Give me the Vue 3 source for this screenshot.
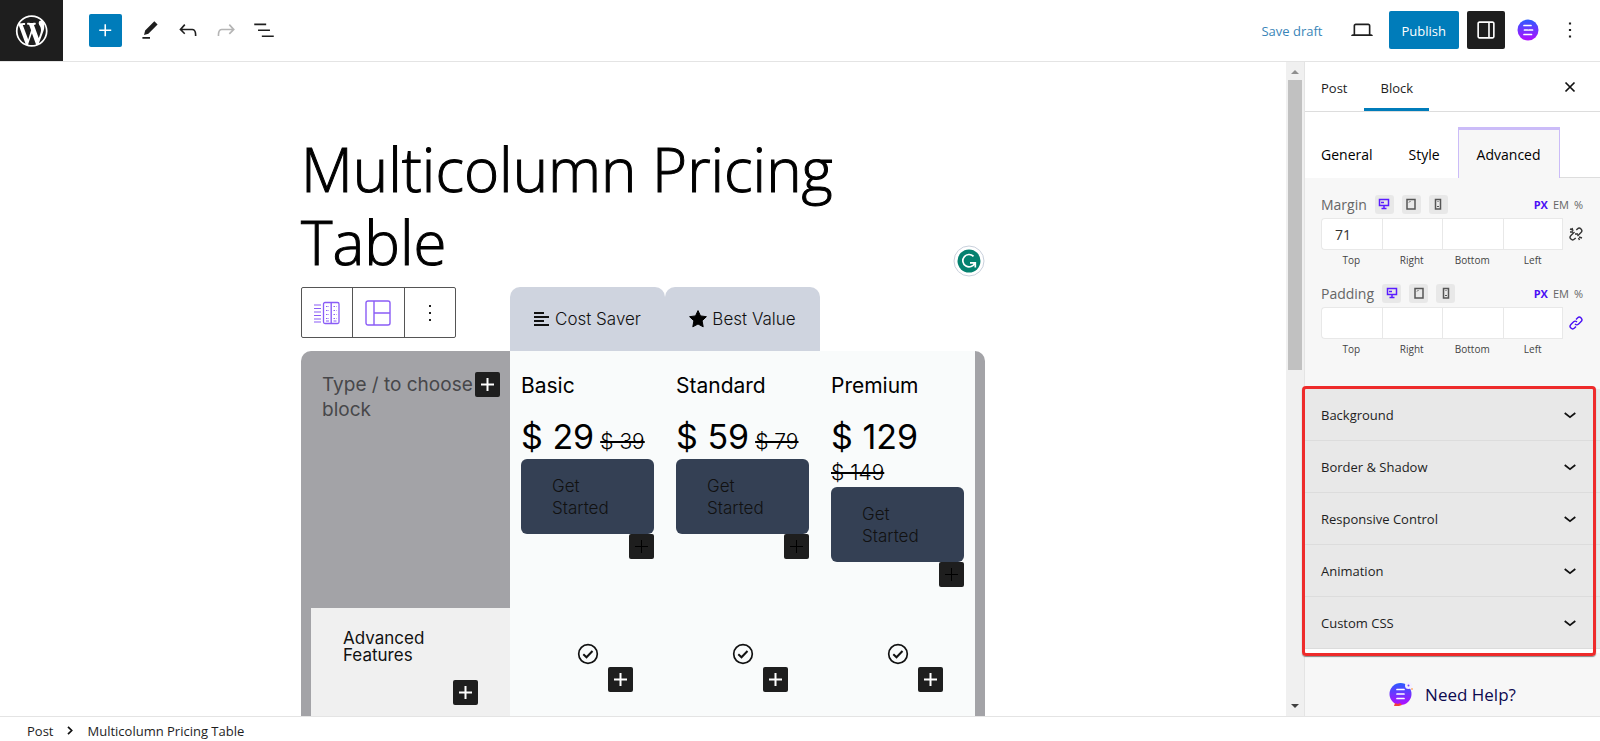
<template>
  <div class="editor">
    <header class="topbar">
      <a href="#" class="logo" aria-label="View posts">
        <svg width="34" height="34" viewBox="0 0 24 24" fill="#fff">
          <path d="M20 10c0-5.51-4.49-10-10-10C4.48 0 0 4.49 0 10c0 5.52 4.48 10 10 10 5.51 0 10-4.48 10-10zM7.78 15.37L4.37 6.22c.55-.02 1.17-.08 1.17-.08.5-.06.44-1.13-.06-1.11 0 0-1.45.11-2.37.11-.18 0-.37 0-.58-.01C4.12 2.69 6.87 1.11 10 1.11c2.33 0 4.45.87 6.05 2.34-.68-.11-1.65.39-1.65 1.58 0 .74.45 1.36.9 2.1.35.61.55 1.36.55 2.46 0 1.49-1.4 5-1.4 5l-3.03-8.37c.54-.02.82-.17.82-.17.5-.05.44-1.25-.06-1.22 0 0-1.44.12-2.38.12-.87 0-2.33-.12-2.33-.12-.5-.03-.56 1.2-.06 1.22l.92.08 1.26 3.41zM17.41 10c.24-.64.74-1.87.43-4.25.7 1.29 1.05 2.71 1.05 4.25 0 3.29-1.73 6.24-4.4 7.78.97-2.59 1.94-5.2 2.92-7.78zM6.1 18.09C3.12 16.65 1.11 13.53 1.11 10c0-1.3.23-2.48.72-3.59C3.25 10.3 4.67 14.2 6.1 18.09zm4.03-6.63l2.58 6.98c-.86.29-1.76.45-2.71.45-.79 0-1.57-.11-2.29-.33.81-2.38 1.62-4.74 2.42-7.1z" transform="translate(.6 .8) scale(1.12)" />
        </svg>
      </a>
      <div class="tools">
        <button class="inserter" aria-label="Add block">
          <svg width="25" height="25" viewBox="0 0 24 24" fill="#fff"><path d="M11 12.5V17.5H12.5V12.5H17.5V11H12.5V6H11V11H6V12.5H11Z" /></svg>
        </button>
        <button class="tool" aria-label="Tools">
          <svg width="26" height="26" viewBox="0 0 24 24" fill="#1e1e1e"><path d="m19 7-3-3-8.500 8.500-1 4 4-1L19 7Zm-7 11.500H5V20h7v-1.500Z" /></svg>
        </button>
        <button class="tool" aria-label="Undo">
          <svg width="26" height="26" viewBox="0 0 24 24" fill="#1e1e1e"><path d="M18.300 11.700c-.6-.6-1.400-.9-2.300-.9H6.700l2.900-3.300-1.100-1-4.500 5L8.500 16l1-1-2.700-2.700H16c.5 0 .9.200 1.300.500 1 1 1 3.400 1 4.500v.300h1.500v-.200c0-1.500 0-4.300-1.500-5.700z" /></svg>
        </button>
        <button class="tool" aria-label="Redo" disabled>
          <svg width="26" height="26" viewBox="0 0 24 24" fill="#b5b5b5"><path d="M15.600 6.500l-1.100 1 2.900 3.300H8c-.9 0-1.700.3-2.300.9-1.400 1.500-1.400 4.200-1.400 5.600v.2h1.500v-.3c0-1.100 0-3.500 1-4.500.3-.3.700-.5 1.300-.5h9.200L14.500 15l1.100 1.100 4.600-4.600-4.600-5z" /></svg>
        </button>
        <button class="tool" aria-label="Document overview">
          <svg width="26" height="26" viewBox="0 0 24 24" fill="#1e1e1e"><path d="M3 6h11v1.500H3V6Zm3.500 5.500h11V13h-11v-1.500ZM21 17H10v1.500h11V17Z" /></svg>
        </button>
      </div>
      <div class="actions">
        <button class="save">Save draft</button>
        <button class="tool" aria-label="Preview">
          <svg width="26" height="26" viewBox="0 0 24 24" fill="#1e1e1e"><path d="M20.500 16h-.7V8c0-1.100-.9-2-2-2H6.200c-1.100 0-2 .9-2 2v8h-.7c-.8 0-1.500.7-1.500 1.500h20c0-.8-.7-1.500-1.500-1.500zM5.700 8c0-.3.200-.5.500-.5h11.600c.3 0 .5.2.5.5v8H5.700V8z" /></svg>
        </button>
        <button class="publish">Publish</button>
        <button class="panel-toggle" aria-label="Settings">
          <svg width="26" height="26" viewBox="0 0 24 24" fill="#fff"><path fill-rule="evenodd" d="M18 4H6c-1.100 0-2 .9-2 2v12c0 1.100.9 2 2 2h12c1.100 0 2-.9 2-2V6c0-1.100-.9-2-2-2zm-4 14.500H6c-.3 0-.5-.2-.5-.5V6c0-.3.2-.5.5-.5h8v13zm4.500-.5c0 .3-.2.500-.5.500h-2.500v-13H18c.3 0 .5.200.5.500v12z" /></svg>
        </button>
        <button class="tool brand" aria-label="Essential Blocks">
          <svg width="22" height="22" viewBox="0 0 22 22">
            <defs>
              <linearGradient id="eb" x1="0" y1="0" x2="0" y2="1"><stop offset="0" stop-color="#2b5cff" /><stop offset="1" stop-color="#b30cff" /></linearGradient>
            </defs>
            <circle cx="11" cy="11" r="10.500" fill="url(#eb)" />
            <path d="M7 6.500h7M7.500 11h3M12 11h3.500M7 15.500h7.500" stroke="#fff" stroke-width="1.700" stroke-linecap="round" />
          </svg>
        </button>
        <button class="tool" aria-label="Options">
          <svg width="26" height="26" viewBox="0 0 24 24" fill="#1e1e1e"><path d="M13 19h-2v-2h2v2zm0-6h-2v-2h2v2zm0-6h-2V5h2v2z" /></svg>
        </button>
      </div>
    </header>

    <div class="body">
      <main class="canvas">
        <div class="content">
          <div class="title-wrap">
            <h1>Multicolumn Pricing<br />Table</h1>
            <button class="grammar" aria-label="Grammar check">
              <svg width="32" height="32" viewBox="0 0 32 32">
                <circle cx="16" cy="16" r="15" fill="#fff" stroke="#c9d0dc" />
                <circle cx="16" cy="16" r="11.500" fill="#04816f" />
                <path d="M20.500 11.400A6.200 6.200 0 1 0 21.800 18M17 17.800h5.300v4.600" fill="none" stroke="#fff" stroke-width="1.700" />
              </svg>
            </button>
          </div>

          <div class="block-top">
            <div class="block-toolbar">
              <button aria-label="Pricing table">
                <svg width="26" height="24" viewBox="0 0 26 24" fill="none" stroke="#8a5cf6">
                  <path d="M0 4h7M0 7.500h7M0 11h7M0 14.500h7M0 18h7M0 21h7" stroke-width="1.200" />
                  <rect x="9.500" y="1.500" width="15.500" height="21" rx="1.500" stroke-width="1.300" />
                  <path d="M17.200 1.500v21" stroke-width="1.400" />
                  <path d="M12 5.500h3M12 9.500h3M12 13.500h3M12 17.500h3M19.500 5.500h3M19.500 9.500h3M19.500 13.500h3M19.500 17.500h3" stroke-dasharray="1.500 1" />
                  <path d="M12 20h3M19.500 20h3" />
                </svg>
              </button>
              <button aria-label="Layout">
                <svg width="26" height="26" viewBox="0 0 26 26" fill="none" stroke="#8a5cf6" stroke-width="1.400">
                  <rect x="1" y="1" width="24" height="24" rx="2" />
                  <path d="M9 1v24M9 13h16" />
                </svg>
              </button>
              <button aria-label="More options">
                <svg width="24" height="24" viewBox="0 0 24 24" fill="#1e1e1e"><path d="M13 20h-2v-2h2v2zm0-7h-2v-2h2v2zm0-7h-2V4h2v2z" /></svg>
              </button>
            </div>
            <div class="ribbon first">
              <svg width="16" height="16" viewBox="0 0 16 16" fill="none" stroke="#111" stroke-width="2"><path d="M0 2h10M0 6h15M0 10h10M0 14h15" /></svg>
              <span>Cost Saver</span>
            </div>
            <div class="ribbon">
              <svg width="18" height="18" viewBox="0 0 18 18" fill="#000"><path d="M9 .6l2.500 5.300 5.900.8-4.300 4.100 1.100 6L9 14l-5.200 2.800 1.100-6L.6 6.700l5.900-.8z" stroke="#000" stroke-linejoin="round" /></svg>
              <span>Best Value</span>
            </div>
          </div>

          <div class="pricing">
            <table>
              <thead>
                <tr>
                  <th class="label-cell">
                    <div class="placeholder">Type / to choose<br />block</div>
                    <button class="plus over" aria-label="Add block"><svg viewBox="0 0 25 25"><path d="M12.500 6v13M6 12.500h13" /></svg></button>
                  </th>
                  <th v-for="plan in plans" :key="plan.name" scope="col">
                    <div class="plan-name">{{ plan.name }}</div>
                    <div class="prices">
                      <span class="price">{{ plan.price }}</span>
                      <s>{{ plan.old }}</s>
                    </div>
                    <button class="cta">Get Started</button>
                    <button class="plus dark" aria-label="Add block"><svg viewBox="0 0 25 25"><path d="M12.500 6v13M6 12.500h13" /></svg></button>
                  </th>
                </tr>
              </thead>
              <tbody>
                <tr>
                  <th class="feature" scope="row">
                    <div>Advanced Features</div>
                    <button class="plus" aria-label="Add block"><svg viewBox="0 0 25 25"><path d="M12.500 6v13M6 12.500h13" /></svg></button>
                  </th>
                  <td v-for="plan in plans" :key="plan.name">
                    <svg class="check" width="22" height="22" viewBox="0 0 22 22" fill="none" stroke="#111" stroke-width="1.700"><circle cx="11" cy="11" r="9.300" /><path d="M6.300 11.300l3.200 3 6-6.300" stroke-width="2" /></svg>
                    <button class="plus" aria-label="Add block"><svg viewBox="0 0 25 25"><path d="M12.500 6v13M6 12.500h13" /></svg></button>
                  </td>
                </tr>
              </tbody>
            </table>
          </div>
        </div>
      </main>

      <div class="scrollbar">
        <svg width="8" height="5" viewBox="0 0 8 5" fill="#8f8f8f"><path d="M0 5l4-4 4 4z" /></svg>
        <div class="track"><div class="thumb"></div></div>
        <svg width="8" height="5" viewBox="0 0 8 5" fill="#404040"><path d="M0 0l4 4 4-4z" /></svg>
      </div>

      <aside class="sidebar">
        <div class="side-head">
          <button class="side-tab">Post</button>
          <button class="side-tab active">Block</button>
          <button class="close" aria-label="Close settings">
            <svg width="12" height="12" viewBox="0 0 12 12" stroke="#111" stroke-width="1.700"><path d="M1.500 1.500l9 9M10.500 1.500l-9 9" /></svg>
          </button>
        </div>
        <div class="tabs">
          <button>General</button>
          <button>Style</button>
          <button class="active">Advanced</button>
          <span class="rest"></span>
        </div>

        <div class="settings">
          <div class="field" v-for="field in fields" :key="field.name">
            <div class="field-head">
              <span class="field-name">{{ field.name }}</span>
              <button class="device active" aria-label="Desktop"><svg width="12" height="12" viewBox="0 0 12 12"><path d="M1.500 1.500h9v6h-9zM6 7.500v3M3.500 10.500h5" /><path d="M3 4.500h3" /></svg></button>
              <button class="device" aria-label="Tablet"><svg width="12" height="12" viewBox="0 0 12 12"><path d="M2 1.500h8v9.500h-8z" /><path d="M4 4.500l1.500-1.500" stroke-width="1" /></svg></button>
              <button class="device" aria-label="Mobile"><svg width="12" height="12" viewBox="0 0 12 12"><path d="M3.500 1.500h5v9.500h-5z" /><path d="M5 8.500h2M5.500 4l1-1" stroke-width="1" /></svg></button>
              <div class="units">
                <button v-for="unit in units" :key="unit" :class="{ active: unit === 'PX' }">{{ unit }}</button>
              </div>
            </div>
            <div class="field-row">
              <div class="sides">
                <div class="side" v-for="side in sides" :key="side">
                  <input type="text" :id="field.name + side" v-model="field.values[side]" />
                  <label :for="field.name + side">{{ side }}</label>
                </div>
              </div>
              <button class="link" :class="{ linked: field.linked }" aria-label="Link sides" @click="field.linked = !field.linked">
                <svg v-if="field.linked" width="14" height="14" viewBox="0 0 14 14"><path d="M6 8a2.600 2.600 0 0 0 3.600 0l2.500-2.500a2.500 2.500 0 0 0-3.600-3.600L7 3.400M8 6a2.600 2.600 0 0 0-3.600 0L1.900 8.500a2.500 2.500 0 0 0 3.600 3.600L7 10.600" /></svg>
                <svg v-else width="14" height="14" viewBox="0 0 14 14"><path d="M8.500 9L12 5.500a2.500 2.500 0 0 0-3.600-3.600L7.300 3M5.500 5L1.900 8.500a2.500 2.500 0 0 0 3.600 3.600l1.200-1.200M1 2l3 1M3 1l1 3M1 5h3M10 10l3 1M9.500 11l1 2M6 7h3" /></svg>
              </button>
            </div>
          </div>
        </div>

        <div class="accordion">
          <button v-for="section in sections" :key="section">
            <span>{{ section }}</span>
            <svg width="12" height="7" viewBox="0 0 12 7" fill="none" stroke="#111" stroke-width="1.700"><path d="M.7 1L6 5.200 11.300 1" /></svg>
          </button>
        </div>

        <a href="#" class="help">
          <svg width="24" height="25" viewBox="0 0 24 25">
            <circle cx="11.500" cy="12" r="11" fill="url(#eb)" />
            <path d="M8 7.500h7M8 12h7M8 16.500h7" stroke="#fff" stroke-width="1.700" stroke-linecap="round" />
            <circle cx="19.500" cy="3.500" r="3.500" fill="#f4f0ff" /><circle cx="19.500" cy="3.500" r="1" fill="#7a3cff" />
            <circle cx="23" cy="7" r="1" fill="#ffb27a" />
            <path d="M5 24l1-3 3 1 2-1 2 2-3 1z" fill="#f0413c" />
          </svg>
          Need Help?
        </a>
      </aside>
    </div>

    <footer class="crumbs">
      <a href="#">Post</a>
      <svg width="6" height="9" viewBox="0 0 6 9" fill="none" stroke="#111" stroke-width="1.700"><path d="M1 .8l3.700 3.700L1 8.200" /></svg>
      <a href="#">Multicolumn Pricing Table</a>
    </footer>
  </div>
</template>

<script setup>
import { ref } from 'vue'

const plans = [
  { name: 'Basic', price: '$ 29', old: '$ 39' },
  { name: 'Standard', price: '$ 59', old: '$ 79' },
  { name: 'Premium', price: '$ 129', old: '$ 149' },
]

const units = ['PX', 'EM', '%']
const sides = ['Top', 'Right', 'Bottom', 'Left']
const sections = ['Background', 'Border & Shadow', 'Responsive Control', 'Animation', 'Custom CSS']

const fields = ref([
  { name: 'Margin', linked: false, values: { Top: '71', Right: '', Bottom: '', Left: '' } },
  { name: 'Padding', linked: true, values: { Top: '', Right: '', Bottom: '', Left: '' } },
])
</script>

<style>
body {
  margin: 0;
}
</style>

<style scoped>
* {
  box-sizing: border-box;
}

.editor {
  display: flex;
  flex-direction: column;
  height: 100vh;
  overflow: hidden;
  background: #fff;
  color: #1e1e1e;
  font-family: "Open Sans", "Noto Sans", sans-serif;
  font-size: 13px;
}

button {
  display: flex;
  align-items: center;
  justify-content: center;
  padding: 0;
  border: none;
  background: none;
  color: inherit;
  font: inherit;
  cursor: pointer;
}

a {
  color: inherit;
  text-decoration: none;
}

svg {
  display: block;
  flex-shrink: 0;
}

.topbar {
  display: flex;
  align-items: center;
  flex-shrink: 0;
  height: 62px;
  border-bottom: 1px solid #e4e4e4;
}

.logo {
  display: flex;
  align-items: center;
  justify-content: center;
  width: 63px;
  height: 61px;
  background: #1e1e1e;
}

.tools {
  display: flex;
  align-items: center;
  gap: 12px;
  margin-left: 26px;
  padding-bottom: 1px;
}

.tool {
  width: 26px;
  height: 36px;
}

.inserter {
  width: 33px;
  height: 33px;
  margin-right: 3px;
  border-radius: 2px;
  background: #007cba;
}

.actions {
  display: flex;
  align-items: center;
  margin-left: auto;
  padding: 0 17px 2px 0;
}

.save {
  margin-right: 26px;
  padding-top: 2px;
  color: #3a85b8;
}

.publish {
  height: 38px;
  margin: 0 8px 0 14px;
  padding: 2px 13px 0;
  border-radius: 2px;
  background: #007cba;
  color: #fff;
}

.panel-toggle {
  width: 38px;
  height: 38px;
  border-radius: 2px;
  background: #1e1e1e;
}

.brand {
  margin: 0 16px 0 10px;
}

.body {
  display: flex;
  flex: 1;
  min-height: 0;
}

.canvas {
  flex: 1;
  min-width: 0;
  overflow: hidden;
}

.content {
  width: 684px;
  max-width: 100%;
  margin: 0 auto;
  padding-top: 71px;
}

.title-wrap {
  position: relative;
  padding-bottom: 8px;
}

h1 {
  margin: 0;
  color: #000;
  font-size: 60px;
  font-weight: 300;
  line-height: 73px;
  -webkit-text-stroke: 1px #000;
}

.grammar {
  position: absolute;
  right: 0;
  bottom: 10px;
}

.block-top {
  display: flex;
  align-items: flex-start;
}

.block-toolbar {
  display: flex;
  width: 155px;
  height: 51px;
  border: 1px solid #555;
  border-radius: 2px;
}

.block-toolbar button {
  flex: 1;
}

.block-toolbar button + button {
  border-left: 1px solid #555;
}

.ribbon {
  display: flex;
  align-items: center;
  justify-content: center;
  gap: 5px;
  width: 155px;
  height: 64px;
  border-radius: 10px 10px 0 0;
  background: #cfd4df;
  color: #111;
  font-family: Inter, sans-serif;
  font-size: 17px;
  font-weight: 300;
}

.ribbon.first {
  margin-left: 54px;
}

.pricing {
  padding: 0 10px;
  overflow: hidden;
  border-radius: 10px 10px 0 0;
  background: #a3a3a7;
  font-family: Inter, sans-serif;
}

table {
  width: 100%;
  border-collapse: collapse;
  table-layout: fixed;
}

th,
td {
  height: 257px;
  padding: 21px 11px 0;
  background: #f9fbfb;
  color: #000;
  font-weight: 400;
  text-align: left;
  vertical-align: top;
}

.label-cell {
  position: relative;
  width: 199px;
  background: #a3a3a7;
}

.placeholder {
  color: #47474a;
  font-size: 19px;
  line-height: 25px;
}

.plus {
  width: 25px;
  height: 25px;
  margin-left: auto;
  border-radius: 2px;
  background: #1e1e1e;
}

.plus svg {
  width: 25px;
  height: 25px;
  stroke: #fff;
  stroke-width: 2;
}

.plus.over {
  position: absolute;
  top: 21px;
  right: 10px;
}

.plus.dark svg {
  stroke: #000;
  stroke-width: 1;
}

.plan-name {
  font-size: 21px;
  line-height: 28px;
}

.prices {
  display: flex;
  flex-wrap: wrap;
  align-items: baseline;
  column-gap: 6px;
  margin-top: 15px;
}

.price {
  font-size: 34px;
  line-height: 44px;
}

s {
  font-size: 21px;
  font-weight: 300;
  line-height: 28px;
}

.cta {
  width: 100%;
  height: 75px;
  padding: 0 31px;
  border-radius: 6px;
  background: #344054;
  color: #111;
  font-size: 17px;
  font-weight: 300;
  line-height: 22px;
  text-align: left;
}

tbody th,
tbody td {
  padding: 35px 32px 0;
}

tbody .feature {
  padding-top: 22px;
  background: #f0f0f0;
  color: #111;
  font-size: 17px;
  line-height: 17px;
}

.feature .plus {
  margin-top: 16px;
}

.check {
  margin: 0 auto 2px;
}

.scrollbar {
  display: flex;
  flex-direction: column;
  align-items: center;
  width: 18px;
  padding: 7px 0;
  background: #f0f0f0;
}

.track {
  flex: 1;
  width: 14px;
  margin: 6px 0;
}

.thumb {
  height: 47%;
  background: #c1c1c1;
}

.sidebar {
  width: 296px;
  border-left: 1px solid #e4e4e4;
  background: #f7f7f7;
}

.side-head {
  display: flex;
  height: 50px;
  border-bottom: 1px solid #ddd;
  background: #fff;
}

.side-tab {
  padding: 2px 17px 0 16px;
}

.side-tab.active {
  border-bottom: 3px solid #007cba;
  padding: 5px 16px 0;
}

.close {
  margin-left: auto;
  padding: 0 24px;
}

.tabs {
  display: flex;
  height: 66px;
  padding-top: 15px;
  background: #fff;
}

.tabs button {
  padding: 4px 18px 0;
  color: #000;
  font-size: 14px;
}

.tabs button:first-child {
  padding-left: 16px;
}

.tabs button.active {
  padding-top: 1px;
  border: 1px solid #cbbcf8;
  border-width: 3px 1px 0;
  background: #f7f7f7;
}

.rest {
  flex: 1;
  border-bottom: 1px solid #ddd;
}

.settings {
  padding: 16px 17px 32px 16px;
}

.field + .field {
  margin-top: 15px;
}

.field-head {
  display: flex;
  align-items: center;
  height: 20px;
  margin-bottom: 4px;
}

.field-name {
  margin-right: 8px;
  color: #666;
  font-size: 14px;
}

.device {
  width: 19px;
  height: 19px;
  margin-right: 8px;
  border-radius: 3px;
  background: #e8e8e8;
}

.device svg {
  fill: none;
  stroke: #555;
  stroke-width: 1.5;
}

.device.active svg {
  stroke: #5a1cff;
}

.units {
  display: flex;
  gap: 5px;
  margin-left: auto;
  color: #666;
  font-size: 11px;
}

.units .active {
  color: #4a10f5;
  font-weight: 700;
}

.field-row {
  display: flex;
  gap: 6px;
}

.sides {
  display: flex;
  flex: 1;
}

.side {
  display: flex;
  flex: 1;
  flex-direction: column;
  align-items: center;
  min-width: 0;
}

.side input {
  width: 100%;
  height: 32px;
  padding: 0 13px;
  border: 1px solid #e8e8e8;
  border-right-width: 0;
  background: #fff;
  color: #333;
  font: inherit;
  font-size: 14px;
}

.side:first-child input {
  border-radius: 4px 0 0 4px;
}

.side:last-child input {
  border-right-width: 1px;
}

.side label {
  margin-top: 2px;
  color: #444;
  font-size: 10px;
  line-height: 16px;
}

.link {
  width: 14px;
  height: 32px;
}

.link svg {
  fill: none;
  stroke: #333;
  stroke-width: 1.4;
}

.link.linked svg {
  stroke: #4a10f5;
}

.accordion {
  position: relative;
  border-bottom: 4px solid #fff;
}

/* red frame around the section list */
.accordion::after {
  position: absolute;
  inset: -3px 4px -7px -3px;
  border: 3px solid #ee2b2b;
  border-radius: 4px;
  box-shadow: 0 1px 1px #888;
  content: "";
  pointer-events: none;
}

.accordion button {
  justify-content: space-between;
  width: 100%;
  height: 52px;
  padding: 1px 24px 0 16px;
  border-bottom: 1px solid #dcdcdc;
  background: #e8e8e8;
}

.help {
  display: flex;
  align-items: center;
  justify-content: center;
  gap: 12px;
  padding-top: 29px;
  color: #0d0a50;
  font-size: 17px;
}

.crumbs {
  display: flex;
  align-items: center;
  flex-shrink: 0;
  gap: 14px;
  height: 25px;
  padding: 3px 27px 0;
  border-top: 1px solid #e4e4e4;
}
</style>
